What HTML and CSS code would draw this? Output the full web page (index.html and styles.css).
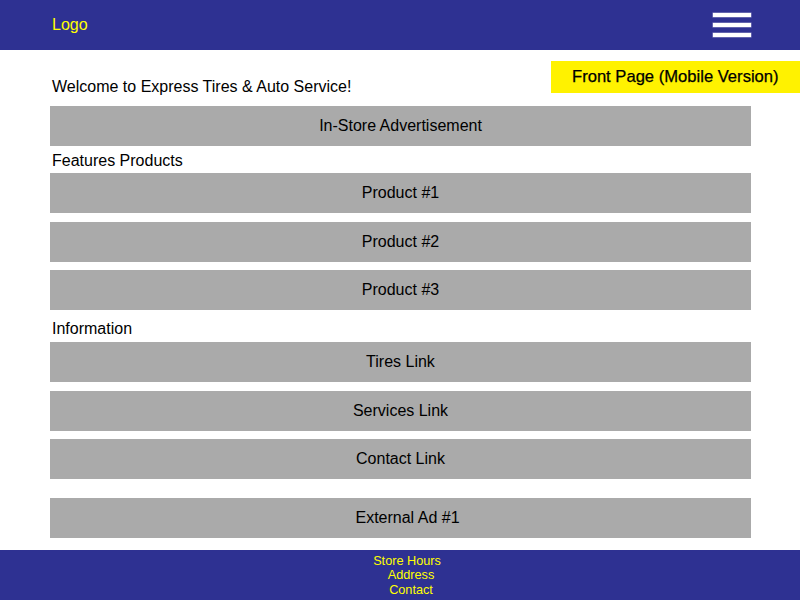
FILE: index.html
```html
<!DOCTYPE html>
<html>
<head>
<meta charset="utf-8">
<link rel="stylesheet" href="styles.css">
</head>
<body>
<header class="topbar">
  <div class="logo">Logo</div>
  <div class="menu" aria-label="menu">
    <span></span><span></span><span></span>
  </div>
</header>
<div class="tag">Front Page (Mobile Version)</div>
<main class="content">
  <p class="welcome">Welcome to Express Tires &amp; Auto Service!</p>
  <div class="bar">In-Store Advertisement</div>
  <p class="label label-features">Features Products</p>
  <div class="bar">Product #1</div>
  <div class="bar gap1">Product #2</div>
  <div class="bar gap2">Product #3</div>
  <p class="label label-info">Information</p>
  <div class="bar">Tires Link</div>
  <div class="bar gap1">Services Link</div>
  <div class="bar gap2">Contact Link</div>
  <div class="bar gap3 ad">External Ad #1</div>
</main>
<footer class="footer">
  <div class="f1">Store Hours</div>
  <div class="f2">Address</div>
  <div class="f3">Contact</div>
</footer>
</body>
</html>
```
FILE: styles.css
```css
* { box-sizing: border-box; }
html, body { margin: 0; padding: 0; }
body {
  width: 800px;
  height: 600px;
  position: relative;
  background: #ffffff;
  font-family: "Liberation Sans", Arial, sans-serif;
  color: #000000;
  display: flex;
  flex-direction: column;
}
.topbar {
  height: 50px;
  background: #2e3192;
  display: flex;
  align-items: center;
  justify-content: space-between;
  padding: 0 49px 0 52px;
}
.logo {
  color: #ffff00;
  font-size: 16px;
  line-height: 18px;
  margin-top: -1px;
}
.menu {
  width: 38px;
  display: flex;
  flex-direction: column;
  gap: 6px;
  margin-top: -1px;
}
.menu span {
  display: block;
  height: 4px;
  background: #ffffff;
  box-shadow: 0 0 0 0.5px rgba(255,255,255,0.5);
}
.tag {
  position: absolute;
  left: 551px;
  top: 61px;
  width: 249px;
  height: 32px;
  background: #fff200;
  color: #000;
  font-size: 16.6px;
  line-height: 31px;
  padding-left: 21px;
  -webkit-text-stroke: 0.25px #000;
}
.content {
  flex: 1;
  padding: 0 49px 0 50px;
}
.welcome {
  margin: 28px 0 10px 2px;
  font-size: 16px;
  line-height: 18px;
}
.label {
  margin: 0 0 3px 2px;
  font-size: 16px;
  line-height: 18px;
}
.label-features { margin-top: 6px; }
.label-info { margin-top: 10px; margin-bottom: 4px; }
.bar {
  height: 40px;
  background: #aaaaaa;
  display: flex;
  align-items: center;
  justify-content: center;
  font-size: 16px;
}
.ad { padding-left: 14px; }
.gap1 { margin-top: 9px; }
.gap2 { margin-top: 8px; }
.gap3 { margin-top: 19px; }
.footer {
  height: 50px;
  background: #2e3192;
  color: #ffff00;
  font-size: 12.7px;
  line-height: 14.5px;
  padding-top: 3.5px;
  display: flex;
  flex-direction: column;
  align-items: center;
}
.f1 { margin-left: 14px; }
.f2 { margin-left: 22px; }
.f3 { margin-left: 22px; }
```
